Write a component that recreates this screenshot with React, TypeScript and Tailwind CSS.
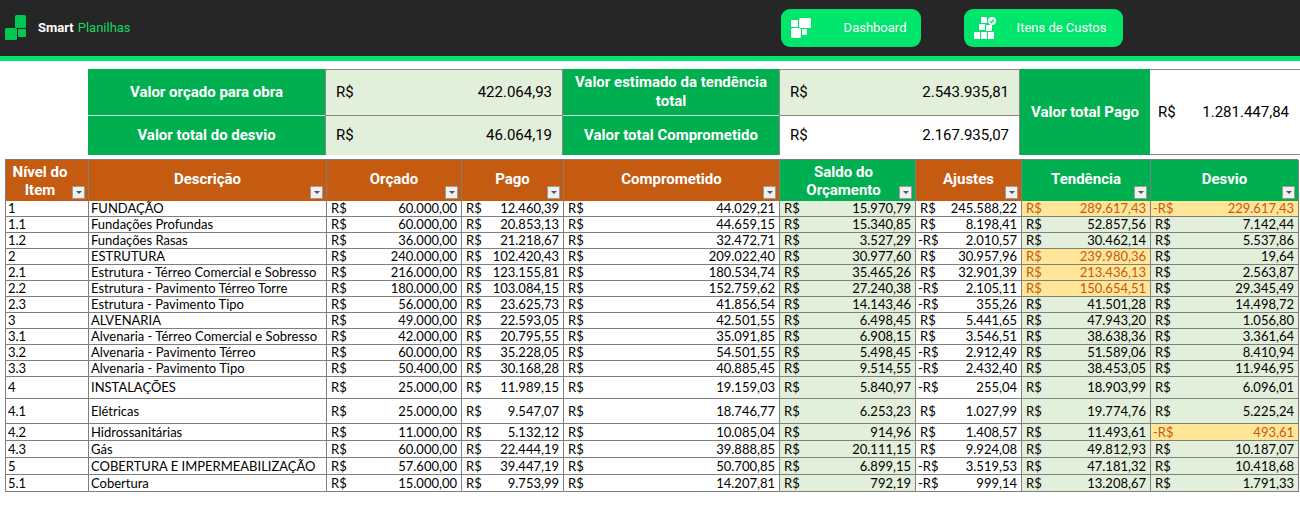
import React from "react";

const F = { fontFamily: "Lato, 'Noto Sans', sans-serif" };
const H = { fontFamily: "Roboto, 'Noto Sans', sans-serif" };

type R = { n: string; d: string; v: string[]; h: number; y?: number[] };
// v: orcado, pago, comprometido, saldo, ajustes, tendencia, desvio ; prefix "-" means -R$
const rows: R[] = [
  { n: "1", d: "FUNDAÇÃO", v: ["60.000,00", "12.460,39", "44.029,21", "15.970,79", "245.588,22", "289.617,43", "-229.617,43"], h: 16, y: [5, 6] },
  { n: "1.1", d: "Fundações Profundas", v: ["60.000,00", "20.853,13", "44.659,15", "15.340,85", "8.198,41", "52.857,56", "7.142,44"], h: 16 },
  { n: "1.2", d: "Fundações Rasas", v: ["36.000,00", "21.218,67", "32.472,71", "3.527,29", "-2.010,57", "30.462,14", "5.537,86"], h: 16 },
  { n: "2", d: "ESTRUTURA", v: ["240.000,00", "102.420,43", "209.022,40", "30.977,60", "30.957,96", "239.980,36", "19,64"], h: 16, y: [5] },
  { n: "2.1", d: "Estrutura - Térreo Comercial e Sobresso", v: ["216.000,00", "123.155,81", "180.534,74", "35.465,26", "32.901,39", "213.436,13", "2.563,87"], h: 16, y: [5] },
  { n: "2.2", d: "Estrutura - Pavimento Térreo Torre", v: ["180.000,00", "103.084,15", "152.759,62", "27.240,38", "-2.105,11", "150.654,51", "29.345,49"], h: 16, y: [5] },
  { n: "2.3", d: "Estrutura - Pavimento Tipo", v: ["56.000,00", "23.625,73", "41.856,54", "14.143,46", "-355,26", "41.501,28", "14.498,72"], h: 16 },
  { n: "3", d: "ALVENARIA", v: ["49.000,00", "22.593,05", "42.501,55", "6.498,45", "5.441,65", "47.943,20", "1.056,80"], h: 16 },
  { n: "3.1", d: "Alvenaria - Térreo Comercial e Sobresso", v: ["42.000,00", "20.795,55", "35.091,85", "6.908,15", "3.546,51", "38.638,36", "3.361,64"], h: 16 },
  { n: "3.2", d: "Alvenaria - Pavimento Térreo", v: ["60.000,00", "35.228,05", "54.501,55", "5.498,45", "-2.912,49", "51.589,06", "8.410,94"], h: 16 },
  { n: "3.3", d: "Alvenaria - Pavimento Tipo", v: ["50.400,00", "30.168,28", "40.885,45", "9.514,55", "-2.432,40", "38.453,05", "11.946,95"], h: 16 },
  { n: "4", d: "INSTALAÇÕES", v: ["25.000,00", "11.989,15", "19.159,03", "5.840,97", "-255,04", "18.903,99", "6.096,01"], h: 22 },
  { n: "4.1", d: "Elétricas", v: ["25.000,00", "9.547,07", "18.746,77", "6.253,23", "1.027,99", "19.774,76", "5.225,24"], h: 25 },
  { n: "4.2", d: "Hidrossanitárias", v: ["11.000,00", "5.132,12", "10.085,04", "914,96", "1.408,57", "11.493,61", "-493,61"], h: 17, y: [6] },
  { n: "4.3", d: "Gás", v: ["60.000,00", "22.444,19", "39.888,85", "20.111,15", "9.924,08", "49.812,93", "10.187,07"], h: 17 },
  { n: "5", d: "COBERTURA E IMPERMEABILIZAÇÃO", v: ["57.600,00", "39.447,19", "50.700,85", "6.899,15", "-3.519,53", "47.181,32", "10.418,68"], h: 17 },
  { n: "5.1", d: "Cobertura", v: ["15.000,00", "9.753,99", "14.207,81", "792,19", "-999,14", "13.208,67", "1.791,33"], h: 17 },
];

const cols = "grid-cols-[83px_238px_135px_102px_216px_136px_106px_129px_148px]";

function Drop() {
  return (
    <span className="absolute right-[3px] bottom-[2px] w-[13px] h-[13px] bg-[#f0f0f0] border border-[#9a9a9a] flex items-center justify-center">
      <span className="w-0 h-0 border-l-[3px] border-r-[3px] border-t-[3px] border-l-transparent border-r-transparent border-t-[#555]" />
    </span>
  );
}

function Money({ v, cls }: { v: string; cls: string }) {
  const neg = v.startsWith("-");
  return (
    <div className={`flex justify-between items-center px-[4px] border-r border-b border-[#7f7f7f] ${cls}`}>
      <span className={neg ? "-ml-[2px]" : ""}>{neg ? "-R$" : "R$"}</span>
      <span>{neg ? v.slice(1) : v}</span>
    </div>
  );
}

export default function App() {
  const hdr = [
    ["Nível do\nItem", "o"],
    ["Descrição", "o"],
    ["Orçado", "o"],
    ["Pago", "o"],
    ["Comprometido", "o"],
    ["Saldo do\nOrçamento", "g"],
    ["Ajustes", "o"],
    ["Tendência", "g"],
    ["Desvio", "g"],
  ];
  return (
    <div className="w-[1300px] h-[507px] overflow-hidden bg-white text-black" style={F}>
      <div className="h-[56px] bg-[#262626] flex items-center">
        <div className="flex items-center ml-[5px]">
          <svg width="24" height="26" viewBox="0 0 24 26">
            <rect x="10" y="0" width="11" height="13" rx="1.5" fill="#00c853" />
            <rect x="0" y="13" width="12" height="12" rx="1.5" fill="#00c853" />
            <rect x="13" y="14" width="8" height="8" rx="1" fill="#00c853" />
          </svg>
          <span className="ml-[9px] text-white font-bold text-[13px]" style={H}>Smart</span>
          <span className="ml-[4px] text-[#17d760] text-[13px]" style={H}>Planilhas</span>
        </div>
        <div className="ml-[650px] w-[140px] h-[38px] rounded-[9px] bg-[#00e56b] flex items-center text-white text-[13px]" style={H}>
          <svg className="ml-[9px]" width="22" height="22" viewBox="0 0 22 22" fill="#fff">
            <rect x="9" y="1" width="12" height="10" rx="1.5" />
            <rect x="1" y="3" width="7" height="7" rx="1" />
            <rect x="1" y="11" width="10" height="10" rx="1.5" />
            <rect x="12" y="12" width="5" height="6" rx="1" />
          </svg>
          <span className="ml-[32px]">Dashboard</span>
        </div>
        <div className="ml-[43px] w-[159px] h-[38px] rounded-[9px] bg-[#00e56b] flex items-center text-white text-[13px]" style={H}>
          <svg className="ml-[9px]" width="24" height="24" viewBox="0 0 24 24" fill="#fff">
            <rect x="8" y="1" width="6" height="6" />
            <circle cx="19" cy="5" r="4" />
            <path d="M17 5l1.5 1.5L21 3.5" stroke="#00e56b" strokeWidth="1.3" fill="none" />
            <rect x="6" y="8" width="6" height="6" />
            <rect x="13" y="9" width="6" height="6" />
            <rect x="1" y="16" width="6" height="7" />
            <rect x="8" y="16" width="6" height="7" />
            <rect x="15" y="16" width="6" height="7" />
          </svg>
          <span className="ml-[20px]">Itens de Custos</span>
        </div>
      </div>
      <div className="h-[5px] bg-[#00e56b]" />
      <div className="h-[8px]" />
      {/* summary */}
      <div className="ml-[88px] flex h-[86px] text-[15px]" style={H}>
        <div className="w-[237px] flex flex-col">
          <div className="h-[47px] bg-[#00b050] text-white font-bold flex items-center justify-center border-b border-[#cfeedd]">Valor orçado para obra</div>
          <div className="flex-1 bg-[#00b050] text-white font-bold flex items-center justify-center">Valor total do desvio</div>
        </div>
        <div className="w-[238px] flex flex-col bg-[#e2efda] border-t border-x border-[#888]">
          <div className="h-[46px] flex justify-between items-center px-[10px] border-b border-[#888]"><span>R$</span><span>422.064,93</span></div>
          <div className="flex-1 flex justify-between items-center px-[10px]"><span>R$</span><span>46.064,19</span></div>
        </div>
        <div className="w-[216px] flex flex-col">
          <div className="h-[47px] bg-[#00b050] text-white font-bold flex items-center justify-center text-center leading-[19px] border-b border-[#cfeedd]">Valor estimado da tendência<br />total</div>
          <div className="flex-1 bg-[#00b050] text-white font-bold flex items-center justify-center">Valor total Comprometido</div>
        </div>
        <div className="w-[241px] flex flex-col border-t border-x border-[#888]">
          <div className="h-[46px] bg-[#e2efda] flex justify-between items-center px-[10px] border-b border-[#888]"><span>R$</span><span>2.543.935,81</span></div>
          <div className="flex-1 flex justify-between items-center px-[10px]"><span>R$</span><span>2.167.935,07</span></div>
        </div>
        <div className="w-[130px] bg-[#00b050] text-white font-bold flex items-center justify-center">Valor total Pago</div>
        <div className="w-[150px] flex items-center justify-between px-[8px] border-y border-[#888]"><span>R$</span><span className="mr-[3px]">1.281.447,84</span></div>
      </div>
      <div className="h-[4px]" />
      {/* table */}
      <div className="ml-[5px] w-[1293px] border-l border-t border-[#7f7f7f] text-[13px] leading-[15px]">
        <div className={`grid ${cols} h-[41px]`}>
          {hdr.map(([t, c], i) => (
            <div key={i} className={`relative flex items-center justify-center text-center text-white font-bold text-[15px] leading-[18px] whitespace-pre border-r border-[#7f7f7f] ${c === "o" ? "bg-[#c55a11]" : "bg-[#00b050]"}`} style={H}>
              <span className={i === 0 ? "-ml-[14px]" : i === 5 ? "-ml-[8px]" : "-mt-[3px]"}>{t}</span>
              <Drop />
            </div>
          ))}
        </div>
        {rows.map((r, ri) => (
          <div key={ri} className={`grid ${cols}`} style={{ height: r.h }}>
            <div className="px-[2px] border-r border-b border-[#7f7f7f] flex items-center">{r.n}</div>
            <div className="px-[2px] border-r border-b border-[#7f7f7f] flex items-center whitespace-nowrap overflow-hidden">{r.d}</div>
            {r.v.map((v, vi) => {
              const yel = r.y?.includes(vi);
              const green = vi === 3 || vi === 5 || vi === 6;
              const cls = yel ? "bg-[#ffe699] text-[#c65911]" : green ? "bg-[#e2efda]" : "bg-white";
              return <Money key={vi} v={v} cls={cls} />;
            })}
          </div>
        ))}
      </div>
    </div>
  );
}
